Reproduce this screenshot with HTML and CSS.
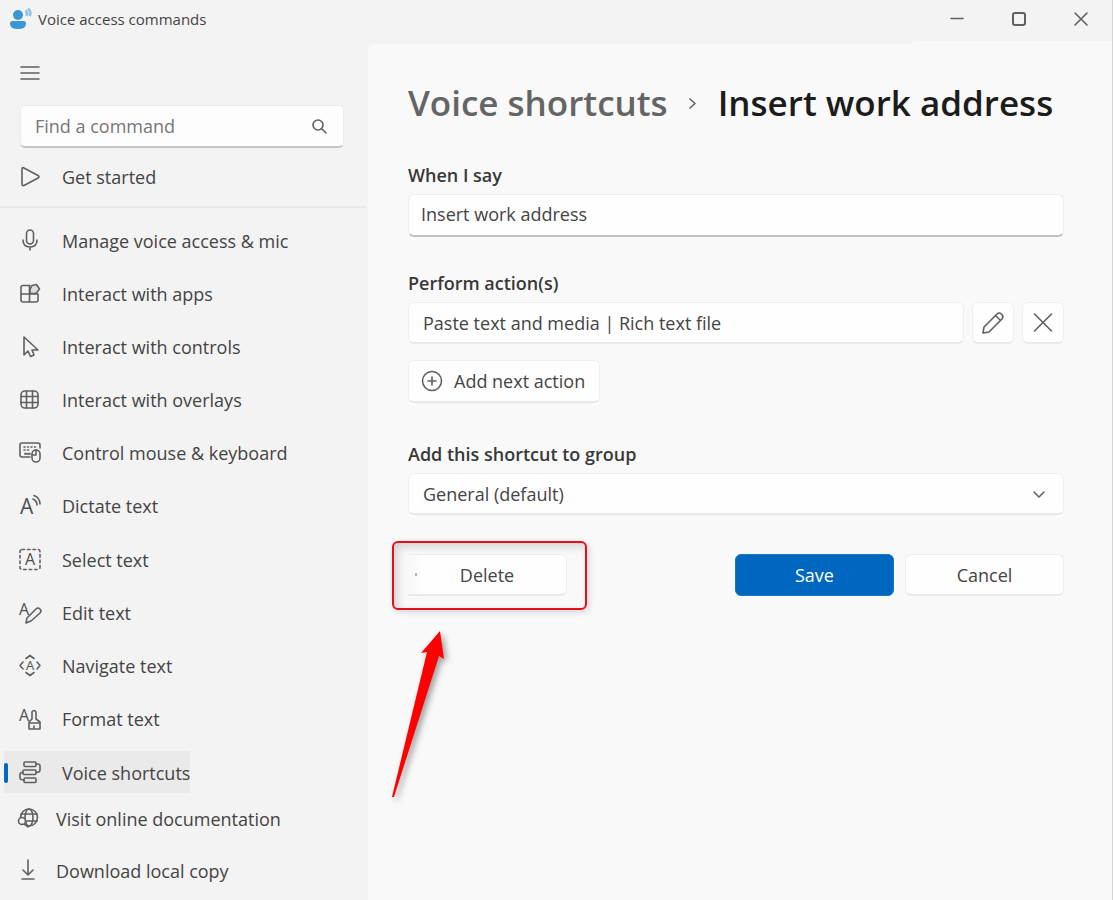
FILE: index.html
```html
<!DOCTYPE html>
<html lang="en">
<head>
<meta charset="utf-8">
<title>Voice access commands</title>
<link rel="stylesheet" href="styles.css">
</head>
<body>
<div class="window">
  <header class="titlebar">
    <svg class="app-icon" width="24" height="24" viewBox="0 0 24 24" aria-hidden="true">
      <circle cx="10" cy="8" r="5" fill="#3c96d4"/>
      <path d="M4.500 14H15.500Q18 14 18 16.500Q18 22 10 22Q2 22 2 16.500Q2 14 4.500 14Z" fill="#3c96d4"/>
      <path d="M17.500 3.500Q20 6 18.500 9M20 1.500Q24 5 21.500 9" fill="none" stroke="#8fc0e4" stroke-width="2.500"/>
    </svg>
    <span class="app-title">Voice access commands</span>
    <div class="window-controls">
      <button class="window-button" aria-label="Minimize"><svg class="icon" width="20" height="20" viewBox="0 0 20 20"><path d="M4 9.500H16"/></svg></button>
      <button class="window-button" aria-label="Maximize"><svg class="icon" width="20" height="20" viewBox="0 0 20 20"><rect x="4" y="4" width="12" height="12" rx="2" stroke-width="2"/></svg></button>
      <button class="window-button" aria-label="Close"><svg class="icon" width="20" height="20" viewBox="0 0 20 20"><path d="M4 4L16 16M16 4L4 16"/></svg></button>
    </div>
  </header>

  <aside class="sidebar">
    <button class="menu-button" aria-label="Menu"><svg class="icon" width="22" height="22" viewBox="0 0 22 22"><path d="M2 5H20M2 11H20M2 17H20"/></svg></button>
    <label class="search">
      <input class="search-input" type="text" placeholder="Find a command" aria-label="Find a command">
      <svg class="icon search-icon" width="18" height="18" viewBox="0 0 18 18" aria-hidden="true"><circle cx="8" cy="8" r="5"/><path d="M11.500 11.500L16 16"/></svg>
    </label>
    <a class="nav-link" href="#"><svg class="icon" width="24" height="24" viewBox="0 0 24 24"><path d="M4 4Q4 2 6 3L20 10.500Q22 12 20 13L6 20.500Q4 21 4 19Z"/></svg>Get started</a>
    <hr class="divider">
    <nav class="nav">
      <a class="nav-link" href="#"><svg class="icon" width="24" height="24" viewBox="0 0 24 24"><rect x="8.500" y="1" width="7" height="14" rx="3.500"/><path d="M5 11Q5 18 12 18Q19 18 19 11M12 18V21"/></svg>Manage voice access &amp; mic</a>
      <a class="nav-link" href="#"><svg class="icon" width="24" height="24" viewBox="0 0 24 24"><path d="M12 3.500H5Q3 3.500 3 5.500V18Q3 20 5 20H18Q20 20 20 18V12H3M11.500 3.500V20"/><path d="M12 7.500L14 3.500L18.500 2.500L21.500 7L18 11.500H12Z" fill="#dedede"/></svg>Interact with apps</a>
      <a class="nav-link" href="#"><svg class="icon" width="24" height="24" viewBox="0 0 24 24"><path d="M6 2V20L10 16L12.500 21.500L16 20L14 15H20Z"/></svg>Interact with controls</a>
      <a class="nav-link" href="#"><svg class="icon" width="24" height="24" viewBox="0 0 24 24"><rect x="3" y="3" width="17" height="17" rx="4"/><path d="M8.500 3V20M14.500 3V20M3 8.500H20M3 14.500H20"/></svg>Interact with overlays</a>
      <a class="nav-link" href="#"><svg class="icon" width="24" height="24" viewBox="0 0 24 24"><path d="M12 16H4Q2 16 2 14V4Q2 2 4 2H20Q22 2 22 4V7"/><path d="M6 6H19M6 9H13M7 12.500H12" stroke-dasharray="1 2.500"/><path d="M7 13H12"/><rect x="14" y="9" width="8" height="12" rx="4" fill="#f3f3f3"/><path d="M18 9V14H14"/></svg>Control mouse &amp; keyboard</a>
      <a class="nav-link" href="#"><svg class="icon" width="24" height="24" viewBox="0 0 24 24" aria-hidden="true"><text class="glyph" x="2" y="20" font-size="21">A</text><path d="M15 5Q19 7 19 11M16 1.500Q22 4 22 10"/></svg>Dictate text</a>
      <a class="nav-link" href="#"><svg class="icon" width="24" height="24" viewBox="0 0 24 24" aria-hidden="true"><rect x="2" y="1.500" width="20" height="20" rx="2" stroke-dasharray="2.500 3"/><text class="glyph" x="7" y="17" font-size="16">A</text></svg>Select text</a>
      <a class="nav-link" href="#"><svg class="icon" width="24" height="24" viewBox="0 0 24 24" aria-hidden="true"><text class="glyph" x="1" y="14" font-size="16">A</text><path d="M8 22L9 17L18 8Q20 6 22 8Q24 10 22 12L13 20Z" fill="#f3f3f3"/></svg>Edit text</a>
      <a class="nav-link" href="#"><svg class="icon" width="24" height="24" viewBox="0 0 24 24" aria-hidden="true"><path d="M8 4.500L12 1.500L16 4.500M8 18.500L12 21.500L16 18.500M5 8L2 11.500L5 15M19 8L22 11.500L19 15"/><text class="glyph" x="8" y="16" font-size="13">A</text></svg>Navigate text</a>
      <a class="nav-link" href="#"><svg class="icon" width="24" height="24" viewBox="0 0 24 24" aria-hidden="true"><text class="glyph" x="1" y="14" font-size="16">A</text><path d="M11 22V15L14 12V5Q16 2 18 5V12L22 15V22ZM11 16H22M16 19V22"/></svg>Format text</a>
      <a class="nav-link nav-link-active" href="#" aria-current="page"><svg class="icon" width="24" height="24" viewBox="0 0 24 24"><rect x="6" y="1" width="12" height="4.500" rx="1"/><rect x="5" y="9" width="13" height="4.500" rx="1"/><rect x="6" y="17" width="12" height="4.500" rx="1"/><path d="M18 3H20Q22 3 22 5V9Q22 11.500 18 11.500M5 11.500H4Q2 11.500 2 14V17Q2 19 6 19"/></svg>Voice shortcuts</a>
    </nav>
    <div class="nav-footer">
      <a class="nav-link" href="#"><svg class="icon" width="24" height="24" viewBox="0 0 24 24"><circle cx="13" cy="10.500" r="8.500"/><ellipse cx="13" cy="10.500" rx="4" ry="8.500"/><path d="M5 7H21M8 14H21"/><circle cx="6" cy="14" r="3.500" fill="#f3f3f3"/><path d="M9 17L12 20"/></svg>Visit online documentation</a>
      <a class="nav-link" href="#"><svg class="icon" width="24" height="24" viewBox="0 0 24 24"><path d="M12 1V16M7 11L12 16L17 11M6 20H18"/></svg>Download local copy</a>
    </div>
  </aside>

  <main class="content">
    <h1 class="breadcrumb">
      <a class="breadcrumb-parent" href="#">Voice shortcuts</a>
      <svg class="icon" width="10" height="16" viewBox="0 0 10 16" aria-hidden="true"><path d="M2 4L7 8.500L2 13"/></svg>
      <span>Insert work address</span>
    </h1>
    <form class="form">
      <div class="field">
        <label class="label" for="phrase">When I say</label>
        <input class="control phrase" id="phrase" type="text" value="Insert work address">
      </div>
      <div class="field field-spaced">
        <label class="label" for="action">Perform action(s)</label>
        <div class="action-row">
          <input class="control" id="action" type="text" value="Paste text and media | Rich text file" readonly>
          <button class="icon-button" type="button" aria-label="Edit action"><svg class="icon" width="24" height="24" viewBox="0 0 24 24"><path d="M2 22L3 16L16 3Q18 1 20.500 3Q23 5.500 21 8L8 21ZM15 5L19 9"/></svg></button>
          <button class="icon-button" type="button" aria-label="Remove action"><svg class="icon" width="24" height="24" viewBox="0 0 24 24"><path d="M3.500 3L20.500 20M20.500 3L3.500 20"/></svg></button>
        </div>
        <button class="add-button" type="button"><svg class="icon" width="24" height="24" viewBox="0 0 24 24"><circle cx="12" cy="12" r="9.500"/><path d="M12 8V16M8 12H16"/></svg>Add next action</button>
      </div>
      <div class="field field-spaced">
        <label class="label" for="group">Add this shortcut to group</label>
        <div class="select-wrap">
          <select class="control" id="group"><option>General (default)</option></select>
          <svg class="icon select-arrow" width="14" height="10" viewBox="0 0 14 10" aria-hidden="true"><path d="M2 3L7 8L12 3"/></svg>
        </div>
      </div>
      <div class="actions">
        <div class="delete-area">
          <button class="button delete" type="button">Delete</button>
          <div class="callout"></div>
          <svg class="arrow" width="72" height="180" viewBox="0 0 72 180" aria-hidden="true"><path d="M52 6L33 28L39 27L4 172L6 172L51 31L56 34Z" fill="#ff0000"/></svg>
        </div>
        <button class="button save" type="button">Save</button>
        <button class="button" type="button">Cancel</button>
      </div>
    </form>
  </main>
</div>
</body>
</html>
```
FILE: styles.css
```css
* { box-sizing: border-box; }

body {
  margin: 0;
  background: #f3f3f3;
  color: #444;
  font-family: "Open Sans", "Noto Sans", sans-serif;
  font-size: 18px;
}

button, input, select { font: inherit; color: inherit; }
button { padding: 0; border: 0; background: none; }
a { color: inherit; text-decoration: none; }

.window {
  display: grid;
  grid-template: 44px 1fr / 368px 1fr;
  min-height: 100vh;
  border-right: 1px solid #d4d4d4;
}

.icon {
  flex: none;
  overflow: visible;
  fill: none;
  stroke: #606060;
  stroke-width: 1.6;
  stroke-linejoin: round;
  stroke-linecap: round;
}
.glyph { fill: #505050; stroke: none; font-weight: 500; }

/* Title bar */
.titlebar {
  grid-column: 1 / -1;
  display: flex;
  align-items: center;
  padding: 0 0 6px 8px;
}
.app-icon { margin-right: 6px; }
.app-title { font-size: 15px; }
.window-controls { display: flex; margin-left: auto; }
.window-button {
  display: grid;
  place-items: center;
  width: 62px;
  height: 36px;
}

/* Sidebar */
.sidebar {
  display: flex;
  flex-direction: column;
  min-height: 0;
  padding: 8px 2px 8px 0;
}
.menu-button {
  display: grid;
  place-items: center;
  width: 44px;
  height: 42px;
  margin-left: 8px;
}
.search {
  position: relative;
  display: flex;
  margin: 11px 22px 8px 20px;
}
.search-input {
  width: 100%;
  height: 43px;
  padding: 0 48px 0 14px;
  border: 1px solid #ececec;
  border-bottom: 2px solid #c4c4c4;
  border-radius: 5px;
  background: #fdfdfd;
}
.search-input::placeholder { color: #767676; opacity: 1; }
.search-icon { position: absolute; right: 16px; top: 12px; }
.nav-link {
  display: flex;
  align-items: center;
  gap: 20px;
  height: 42px;
  padding: 0 18px;
  white-space: nowrap;
}
.divider {
  width: 100%;
  margin: 8px 0 12px;
  border: 0;
  border-top: 2px solid #e9e9e9;
}
.nav {
  display: flex;
  flex: 1;
  flex-direction: column;
  justify-content: space-between;
}
.nav-link-active {
  position: relative;
  align-self: flex-start;
  margin-left: 4px;
  padding: 2px 0 0 14px;
  background: #eaeaea;
}
.nav-link-active::before {
  content: "";
  position: absolute;
  top: 12px;
  left: 0;
  width: 4px;
  height: 20px;
  border-radius: 2px;
  background: #0067c0;
}
.nav-footer {
  display: grid;
  gap: 10px;
  margin-top: 5px;
}
.nav-footer .nav-link { gap: 16px; padding-left: 16px; }

/* Content */
.content {
  position: relative;
  padding: 31px 48px 32px 40px;
  border-top-left-radius: 6px;
  background: #f9f9f9;
}
.content::before {
  content: "";
  position: absolute;
  top: -3px;
  right: 0;
  width: 199px;
  height: 3px;
  background: #f9f9f9;
}
.breadcrumb {
  display: flex;
  align-items: center;
  gap: 20px;
  margin: 0 0 32px;
  color: #1c1c1c;
  font-size: 35px;
  font-weight: 600;
  line-height: 56px;
  white-space: nowrap;
}
.breadcrumb-parent { color: #656565; }
.form, .field { display: grid; }
.label {
  margin-bottom: 7px;
  font-weight: 600;
  line-height: 24px;
  color: #383838;
}
.field { margin-bottom: 34px; }
.field-spaced { margin-bottom: 39px; }
.control {
  width: 100%;
  min-width: 0;
  height: 42px;
  padding: 0 14px;
  border: 1px solid #efefef;
  border-bottom: 2px solid #e9e9e9;
  border-radius: 6px;
  background: #fefefe;
  appearance: none;
}
.phrase {
  height: 43px;
  padding: 0 14px 2px 12px;
  border-bottom-color: #c0c0c0;
}
.action-row { display: flex; gap: 8px; }
.icon-button, .add-button, .button {
  border: 1px solid #efefef;
  border-bottom: 2px solid #e9e9e9;
  border-radius: 6px;
  background: #fefefe;
}
.icon-button {
  display: grid;
  flex: none;
  place-items: center;
  width: 42px;
  height: 42px;
}
.add-button {
  display: flex;
  align-items: center;
  justify-self: start;
  gap: 10px;
  height: 43px;
  margin-top: 16px;
  padding: 0 14px 0 11px;
}
.select-wrap { position: relative; display: grid; }
.select-arrow { position: absolute; right: 18px; top: 16px; }
.actions { display: flex; gap: 11px; }
.button { width: 159px; height: 42px; }
.save {
  border: 1px solid #1a76c6;
  background: #0067c0;
  color: #fff;
}
.delete-area { position: relative; margin-right: auto; }
.delete {
  border-left: 0;
  border-radius: 0 6px 6px 0;
  background: linear-gradient(90deg, #f9f9f9 4px, #fefefe 16px);
}
/* Small mark at the faded left edge of the button */
.delete::before {
  content: "";
  position: absolute;
  top: 19px;
  left: 7px;
  width: 2px;
  height: 3px;
  border-radius: 1px;
  background: #a8a8a8;
}
.callout {
  position: absolute;
  top: -13px;
  left: -16px;
  width: 195px;
  height: 69px;
  border: 2px solid #e3101c;
  border-radius: 6px;
  box-shadow: 2px 2px 6px #00000026, inset 4px 4px 8px #00000026;
  pointer-events: none;
}
.arrow {
  position: absolute;
  top: 71px;
  left: -20px;
  filter: drop-shadow(3px 3px 3px #00000060);
  pointer-events: none;
}
```
